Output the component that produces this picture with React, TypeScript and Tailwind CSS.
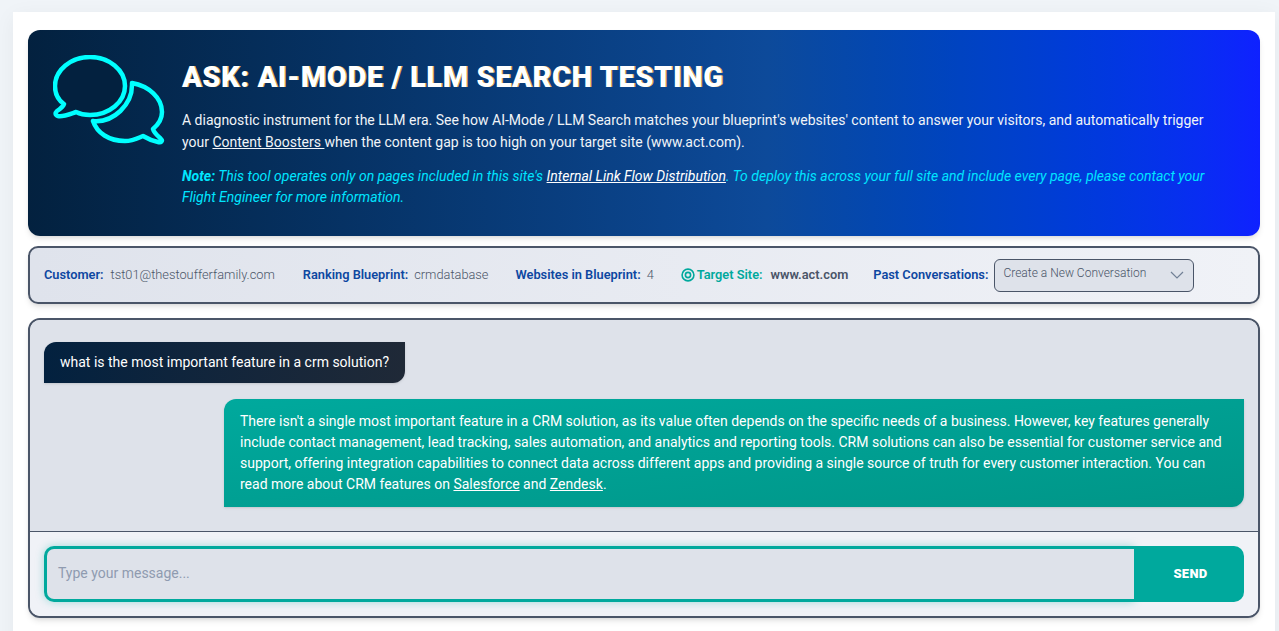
const App = () => {
  return (
    <div className="h-[631px] bg-[#f0f4f8] pl-[13px] pr-1 pt-3 font-['Roboto',sans-serif] overflow-hidden">
      <div className="bg-white h-[640px] px-[15px] pt-[18px] shadow-[0_4px_20px_rgba(0,0,0,0.05)]">
        {/* Header */}
        <div className="h-[206px] rounded-xl bg-gradient-to-r from-[#03213f] via-[#0d4a9a] via-60% to-[#0f21ff] flex pl-[25px] pr-[30px] pt-[25px] text-[#f0f4f8] shadow-md">
          <svg className="w-[112px] h-[92px] shrink-0" viewBox="0 0 112 92" fill="none" stroke="#00ffff" strokeWidth="4.5" strokeLinejoin="round">
            <path d="M79 28C96 31 109 43 109 57C109 63 106 69 100 74C101 78 105 81 108 84C110 86 108 88 105 87C100 86 95 84 90 81C85 83 80 86 72 86C56 86 44 78 40 66C60 68 80 50 79 28Z" />
            <path d="M37 2C56 2 72 15 72 31C72 47 56 60 37 60C32 60 27 59 23 57C17 59 10 62 5 61C2 60 2 58 4 56C7 54 10 52 11 49C5 45 2 38 2 31C2 15 18 2 37 2Z" fill="#03213f" />
          </svg>
          <div className="ml-[17px] flex-1">
            <h1 className="text-[29px] leading-[44px] font-black uppercase tracking-[0.6px] text-white whitespace-nowrap [text-shadow:1px_0_0_#d9a441]">ASK: AI-MODE / LLM Search Testing</h1>
            <p className="mt-[10px] text-[14px] leading-[22px]">
              A diagnostic instrument for the LLM era. See how AI-Mode / LLM Search matches your blueprint's websites' content to answer your visitors, and automatically trigger your <a className="underline">Content Boosters </a>when the content gap is too high on your target site (www.act.com).
            </p>
            <p className="mt-[13px] text-[14px] leading-[21px] italic text-[#00e5ff]">
              <b className="font-bold">Note:</b> This tool operates only on pages included in this site's <a className="underline text-white">Internal Link Flow Distribution</a>. To deploy this across your full site and include every page, please contact your Flight Engineer for more information.
            </p>
          </div>
        </div>

        {/* Info bar */}
        <div className="mt-[10px] h-[58px] rounded-[10px] border-2 border-[#4a5568] bg-gradient-to-r from-[#dfe3ec] to-[#f0f2f7] flex items-center pl-[14px] text-[12.8px] shadow-md">
          <b className="font-semibold text-[#0d47a1]">Customer:</b>
          <span className="ml-[7px] font-light text-[#4a5568]">tst01@thestoufferfamily.com</span>
          <b className="ml-[28px] font-semibold text-[#0d47a1]">Ranking Blueprint:</b>
          <span className="ml-[6px] font-light text-[#4a5568]">crmdatabase</span>
          <b className="ml-[27px] font-semibold text-[#0d47a1]">Websites in Blueprint:</b>
          <span className="ml-[6px] font-light text-[#4a5568]">4</span>
          <svg className="ml-[27px] w-[14px] h-[14px]" viewBox="0 0 14 14" fill="none" stroke="#00a99d" strokeWidth="1.6">
            <circle cx="7" cy="7" r="5.9" />
            <circle cx="7" cy="7" r="2.6" />
          </svg>
          <b className="ml-[2px] font-semibold text-[#00a99d]">Target Site:</b>
          <span className="ml-[8px] font-semibold text-[#4a5568]">www.act.com</span>
          <b className="ml-[25px] font-semibold text-[#0d47a1]">Past Conversations:</b>
          <div className="ml-[6px] w-[200px] h-[33px] rounded-md border border-[#4a5568] bg-[#dee2ea] flex items-center justify-between pl-2 pr-[9px] text-[12px] font-light text-[#4a5568]">
            <span className="-mt-1">Create a New Conversation</span>
            <svg className="w-[14px] h-[8px]" viewBox="0 0 14 8" fill="none" stroke="#718096" strokeWidth="1.2"><path d="M1 1l6 6 6-6" /></svg>
          </div>
        </div>

        {/* Chat */}
        <div className="mt-[14px] h-[300px] rounded-xl border-2 border-[#4a5568] overflow-hidden flex flex-col shadow-md">
          <div className="h-[212px] bg-[#dee2ea] px-[14px] pt-[22px] border-b border-[#4a5568] text-[14px] leading-[21px] text-white">
            <div className="w-fit rounded-[12px] rounded-tr-none rounded-bl-none bg-gradient-to-r from-[#03213f] to-[#1f2937] px-4 py-[10px] shadow-sm">what is the most important feature in a crm solution?</div>
            <div className="ml-auto mt-4 w-[1020px] rounded-[12px] rounded-tr-none rounded-bl-none bg-gradient-to-br from-[#00a99d] to-[#009688] px-4 pt-[12px] pb-[12px] shadow-sm">
              There isn't a single most important feature in a CRM solution, as its value often depends on the specific needs of a business. However, key features generally include contact management, lead tracking, sales automation, and analytics and reporting tools. CRM solutions can also be essential for customer service and support, offering integration capabilities to connect data across different apps and providing a single source of truth for every customer interaction. You can read more about CRM features on <a className="underline">Salesforce</a> and <a className="underline">Zendesk</a>.
            </div>
          </div>
          <div className="flex-1 bg-[#f0f2f7] px-[14px] pt-[14px]">
            <div className="flex h-[56px]">
              <div className="flex-1 rounded-l-[10px] border-[3px] border-r-0 border-[#00a99d] bg-[#dee2ea] flex items-center pl-[11px] pb-[2px] text-[14px] text-[#8f9bb0] shadow-[0_0_8px_rgba(0,169,157,0.35)]">Type your message...</div>
              <button className="w-[110px] pl-[3px] rounded-r-[10px] bg-[#00a99d] text-white text-[13px] font-black tracking-[0.3px]">SEND</button>
            </div>
          </div>
        </div>
      </div>
    </div>
  );
};

export default App;
